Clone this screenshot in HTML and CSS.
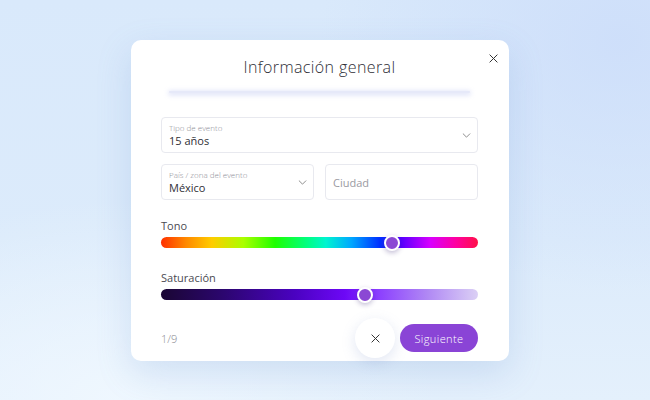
FILE: index.html
```html
<!DOCTYPE html>
<html lang="es">
<head>
<meta charset="utf-8">
<link rel="stylesheet" href="styles.css">
</head>
<body>
<div class="card">
  <button class="close" aria-label="Cerrar">
    <svg width="9" height="9" viewBox="0 0 10 10"><path d="M1 1L9 9M9 1L1 9" stroke="#333" stroke-width="1.1" stroke-linecap="round"/></svg>
  </button>
  <h1 class="title">Información general</h1>
  <div class="sep"></div>
  <div class="field full">
    <div class="field-text">
      <span class="field-label">Tipo de evento</span>
      <span class="field-value">15 años</span>
    </div>
    <svg class="chev" width="9" height="5" viewBox="0 0 10 6"><path d="M1 1L5 5L9 1" fill="none" stroke="#777" stroke-width="1" stroke-linecap="round" stroke-linejoin="round"/></svg>
  </div>
  <div class="row">
    <div class="field">
      <div class="field-text">
        <span class="field-label">País / zona del evento</span>
        <span class="field-value">México</span>
      </div>
      <svg class="chev" width="9" height="5" viewBox="0 0 10 6"><path d="M1 1L5 5L9 1" fill="none" stroke="#777" stroke-width="1" stroke-linecap="round" stroke-linejoin="round"/></svg>
    </div>
    <div class="field">
      <span class="placeholder">Ciudad</span>
    </div>
  </div>
  <div class="slider-block tono">
    <div class="slider-label">Tono</div>
    <div class="track hue"><span class="thumb" style="left:73%"></span></div>
  </div>
  <div class="slider-block sat">
    <div class="slider-label">Saturación</div>
    <div class="track saturation"><span class="thumb" style="left:64.5%"></span></div>
  </div>
  <div class="footer">
    <span class="step">1/9</span>
    <div class="actions">
      <button class="cancel" aria-label="Cancelar">
        <svg width="9" height="9" viewBox="0 0 10 10"><path d="M1 1L9 9M9 1L1 9" stroke="#333" stroke-width="1.1" stroke-linecap="round"/></svg>
      </button>
      <button class="next">Siguiente</button>
    </div>
  </div>
</div>
</body>
</html>
```
FILE: styles.css
```css
* { box-sizing: border-box; }
html, body { margin: 0; height: 100%; }
body {
  width: 650px;
  height: 400px;
  overflow: hidden;
  font-family: "Open Sans", "Liberation Sans", sans-serif;
  background:
    radial-gradient(ellipse 320px 200px at 120px 400px, rgba(240,248,255,0.9), rgba(240,248,255,0) 100%),
    radial-gradient(ellipse 300px 250px at 620px 40px, rgba(205,222,250,0.9), rgba(205,222,250,0) 100%),
    linear-gradient(180deg, #d9e9fb 0%, #dcebfb 60%, #e4f0fc 100%);
  padding-top: 40px;
}
.card {
  position: relative;
  margin-left: 131px;
  width: 378px;
  height: 321px;
  background: #fff;
  border-radius: 10px;
  box-shadow: 0 12px 34px rgba(110, 150, 210, 0.22);
  padding: 16px 31px 0 30px;
  display: flex;
  flex-direction: column;
}
.close {
  position: absolute;
  right: 8px;
  top: 10px;
  width: 16px;
  height: 16px;
  padding: 0;
  border: 0;
  background: none;
  display: flex;
  align-items: center;
  justify-content: center;
}
.title {
  margin: 0;
  text-align: center;
  font-size: 16px;
  font-weight: 300;
  color: #2e2e36;
  line-height: 22px;
  letter-spacing: 0.4px;
}
.sep {
  margin: 13px 8px 0 8px;
  height: 2px;
  border-radius: 2px;
  background: #e6e9f9;
  box-shadow: 0 1px 5px 1px rgba(160, 172, 235, 0.4);
}
.field {
  height: 36px;
  border: 1px solid #e8e9ef;
  border-radius: 4px;
  display: flex;
  align-items: center;
  padding: 0 6px 0 7px;
  flex: 1;
}
.field.full { margin-top: 24px; flex: none; }
.field-text {
  display: flex;
  flex-direction: column;
  flex: 1;
  padding-top: 1px;
}
.field-label {
  font-size: 8px;
  line-height: 10px;
  color: #8e8e96;
  font-weight: 300;
}
.field-value {
  font-size: 11px;
  line-height: 15px;
  color: #2f2f36;
}
.placeholder {
  font-size: 11px;
  color: #9a9aa2;
}
.chev { flex: none; }
.row {
  display: flex;
  gap: 11px;
  margin-top: 11px;
}
.slider-block { display: flex; flex-direction: column; }
.tono { margin-top: 19px; }
.sat { margin-top: 23px; }
.slider-label {
  font-size: 11px;
  line-height: 14px;
  color: #4a4a52;
  margin-bottom: 4px;
}
.track {
  position: relative;
  height: 11px;
  border-radius: 6px;
}
.hue {
  background: linear-gradient(90deg, #ff3000 0%, #ff8a00 8%, #ffcc00 16%, #aaff00 26%, #1eff00 36%, #00ff80 46%, #00f5d0 52%, #00a8ff 60%, #0030ff 69%, #5a00ff 76%, #d800ff 85%, #ff00a0 93%, #ff1048 100%);
}
.saturation {
  background: linear-gradient(90deg, #1a0633 0%, #2c0670 20%, #4a02c0 42%, #6d08f6 58%, #8a3cff 68%, #b088f4 84%, #dbd0f5 100%);
}
.thumb {
  position: absolute;
  top: 50%;
  width: 16px;
  height: 16px;
  margin: -8px 0 0 -8px;
  border-radius: 50%;
  background: #8b48d4;
  border: 2px solid #fff;
  box-shadow: 0 2px 5px rgba(60, 40, 120, 0.3);
}
.footer {
  margin-top: auto;
  height: 46px;
  display: flex;
  align-items: center;
  justify-content: space-between;
}
.step {
  font-size: 11px;
  color: #8a8a92;
  font-weight: 300;
}
.actions {
  display: flex;
  align-items: center;
  gap: 5px;
}
.cancel {
  width: 40px;
  height: 40px;
  border-radius: 50%;
  border: 0;
  background: #fff;
  box-shadow: 0 4px 14px rgba(120, 140, 200, 0.22);
  display: flex;
  align-items: center;
  justify-content: center;
  padding: 0;
}
.next {
  width: 78px;
  height: 28px;
  border: 0;
  border-radius: 14px;
  background: #8a44d6;
  color: #fff;
  font-family: inherit;
  font-size: 11px;
  font-weight: 300;
  letter-spacing: 0.4px;
  padding: 0;
}
```
